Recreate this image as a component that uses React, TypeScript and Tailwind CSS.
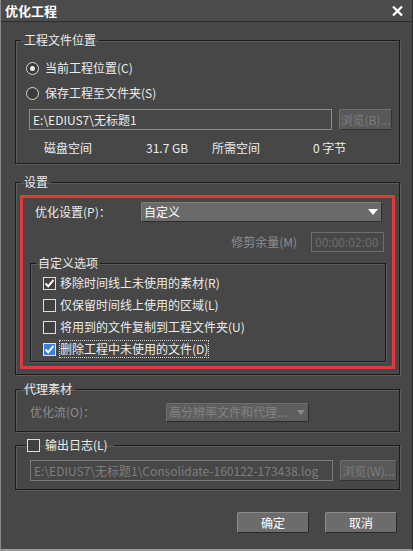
import React from "react";

const font = { fontFamily: '"Noto Sans CJK SC", "Noto Sans", sans-serif' };

const frame =
    "border border-[#1c1c1c] shadow-[1px_1px_0_#5c5c5c,inset_1px_1px_0_#5c5c5c]";

function Radio({ checked }: { checked?: boolean }) {
    return (
        <span className="w-[13px] h-[13px] rounded-full border border-[#d8d8d8] bg-[#3c3c3c] flex items-center justify-center shrink-0">
            {checked && <span className="w-[5px] h-[5px] rounded-full bg-[#f0f0f0]" />}
        </span>
    );
}

function Check({ checked, blue }: { checked?: boolean; blue?: boolean }) {
    return (
        <span
            className={`w-[13px] h-[13px] border border-[#e0e0e0] flex items-center justify-center shrink-0 ${
                blue ? "bg-[#3d7fd9]" : "bg-[#404040]"
            }`}
        >
            {checked && (
                <svg width="11" height="11" viewBox="0 0 11 11">
                    <path
                        d="M1.5 5.5 L4.2 8.3 L9.5 1.8"
                        fill="none"
                        stroke="#ffffff"
                        strokeWidth="2"
                    />
                </svg>
            )}
        </span>
    );
}

function Browse({ label, width }: { label: string; width: string }) {
    return (
        <div
            className={`${width} h-[21px] rounded-[2px] bg-[#585858] border border-[#6e6e6e] border-b-[#333] border-r-[#333] flex items-center justify-center text-[#7c7c7c] text-[12px]`}
        >
            {label}
        </div>
    );
}

export default function App() {
    const options = [
        { text: "移除时间线上未使用的素材(R)", checked: true },
        { text: "仅保留时间线上使用的区域(L)", checked: false },
        { text: "将用到的文件复制到工程文件夹(U)", checked: false },
        { text: "删除工程中未使用的文件(D)", checked: true, focus: true },
    ];

    return (
        <div
            style={font}
            className="w-[413px] h-[551px] bg-[#474747] text-[#ececec] text-[12px] leading-[18px] flex flex-col border-l border-[#8a8a8a] border-b-2 border-b-[#9a9a9a] border-r border-r-[#2a2a2a]"
        >
            {/* Title bar */}
            <div className="h-[22px] shrink-0 flex items-center justify-between pl-[4px] pr-[8px] bg-[#4b4b4b] border-b border-[#2c2c2c]">
                <span className="font-bold text-[13px] text-white">优化工程</span>
                <svg width="13" height="12" viewBox="0 0 13 12">
                    <path d="M2 1.5 L11 10.5 M11 1.5 L2 10.5" stroke="#ffffff" strokeWidth="2.4" />
                </svg>
            </div>

            {/* 工程文件位置 */}
            <fieldset className={`${frame} mt-[9px] ml-[14px] mr-[12px]`}>
                <legend className="ml-[5px] px-[3px]">工程文件位置</legend>
                <div className="pl-[10px] pr-[6px] pb-[6px]">
                    <div className="pt-[9px] flex items-center gap-[6px] h-[29px]">
                        <Radio checked />
                        <span>当前工程位置(C)</span>
                    </div>
                    <div className="mt-[5px] flex items-center gap-[6px] h-[20px]">
                        <Radio />
                        <span>保存工程至文件夹(S)</span>
                    </div>
                    <div className="mt-[6px] ml-[3px] flex items-center gap-[7px]">
                        <div className="w-[303px] h-[21px] border border-[#8c8c8c] bg-[#474747] px-[3px] flex items-center">
                            E:\EDIUS7\无标题1
                        </div>
                        <Browse label="浏览(B)..." width="w-[53px]" />
                    </div>
                    <div className="mt-[9px] flex items-center h-[18px] pl-[18px]">
                        <span className="w-[102px]">磁盘空间</span>
                        <span className="w-[66px]">31.7 GB</span>
                        <span className="w-[101px]">所需空间</span>
                        <span>0 字节</span>
                    </div>
                </div>
            </fieldset>

            {/* 设置 */}
            <fieldset className={`${frame} mt-[9px] ml-[14px] mr-[12px]`}>
                <legend className="ml-[5px] px-[3px]">设置</legend>
                <div className="px-[4px] pb-[5px]">
                    <div className="mt-[4px] border-[3px] border-[#e2393c] pb-[4px]">
                        <div className="mt-[4px] flex items-center h-[20px] pl-[12px] pr-[10px]">
                            <span className="w-[106px]">优化设置(P)：</span>
                            <div className="flex-1 h-[20px] rounded-[2px] bg-[#6a6a6a] border border-[#7e7e7e] border-b-[#2e2e2e] border-r-[#2e2e2e] flex items-center justify-between pl-[2px] pr-[3px] text-white">
                                <span>自定义</span>
                                <svg width="10" height="6" viewBox="0 0 10 6">
                                    <path d="M0 0 H10 L5 6 Z" fill="#ffffff" />
                                </svg>
                            </div>
                        </div>
                        <div className="mt-[10px] flex items-center justify-end h-[20px] pr-[8px] gap-[14px]">
                            <span className="text-[#8e8e8e]">修剪余量(M)</span>
                            <div className="w-[73px] h-[20px] border border-[#6e6e6e] text-[#6e6e6e] flex items-center px-[3px]">
                                00:00:02:00
                            </div>
                        </div>
                        <fieldset className={`${frame} mt-[2px] ml-[7px] mr-[6px]`}>
                            <legend className="ml-[5px] px-[2px]">自定义选项</legend>
                            <div className="flex flex-col pl-[12px] pb-[1px]">
                                {options.map((o) => (
                                    <div key={o.text} className="h-[22px] flex items-center gap-[4px]">
                                        <Check checked={o.checked} blue={o.focus} />
                                        <span
                                            className={
                                                o.focus
                                                    ? "outline outline-1 outline-dotted outline-[#d0d0d0] leading-[16px]"
                                                    : ""
                                            }
                                        >
                                            {o.text}
                                        </span>
                                    </div>
                                ))}
                            </div>
                        </fieldset>
                    </div>
                </div>
            </fieldset>

            {/* 代理素材 */}
            <fieldset className={`${frame} mt-[5px] ml-[14px] mr-[12px]`}>
                <legend className="ml-[5px] px-[3px]">代理素材</legend>
                <div className="pl-[14px] pb-[9px] mt-[4px] flex items-center h-[29px]">
                    <span className="w-[136px] text-[#8e8e8e]">优化流(O)：</span>
                    <div className="w-[143px] h-[19px] rounded-[2px] bg-[#5e5e5e] border border-[#6e6e6e] border-b-[#2e2e2e] border-r-[#2e2e2e] flex items-center justify-between pl-[2px] pr-[3px] text-[#828282]">
                        <span>高分辨率文件和代理...</span>
                        <svg width="8" height="5" viewBox="0 0 8 5">
                            <path d="M0 0 H8 L4 5 Z" fill="#8a8a8a" />
                        </svg>
                    </div>
                </div>
            </fieldset>

            {/* 输出日志 */}
            <fieldset className={`${frame} mt-[4px] ml-[14px] mr-[12px]`}>
                <legend className="ml-[10px] px-[1px] flex items-center gap-[5px] pr-[6px]">
                    <Check />
                    <span>输出日志(L)</span>
                </legend>
                <div className="pl-[14px] pb-[8px] mt-[6px] flex items-center gap-[7px]">
                    <div className="w-[303px] h-[21px] border border-[#7a7a7a] px-[3px] flex items-center text-[#7e7e7e] whitespace-nowrap overflow-hidden">
                        E:\EDIUS7\无标题1\Consolidate-160122-173438.log
                    </div>
                    <Browse label="浏览(W)..." width="w-[57px]" />
                </div>
            </fieldset>

            {/* Buttons */}
            <div className="mt-[22px] flex justify-end gap-[16px] pr-[15px]">
                <button className="w-[72px] h-[21px] rounded-[2px] bg-[#6c6c6c] border border-[#8c8c8c] border-b-[#2a2a2a] border-r-[#2a2a2a] text-white text-[12px]">
                    确定
                </button>
                <button className="w-[72px] h-[21px] rounded-[2px] bg-[#6c6c6c] border border-[#8c8c8c] border-b-[#2a2a2a] border-r-[#2a2a2a] text-white text-[12px]">
                    取消
                </button>
            </div>
        </div>
    );
}
